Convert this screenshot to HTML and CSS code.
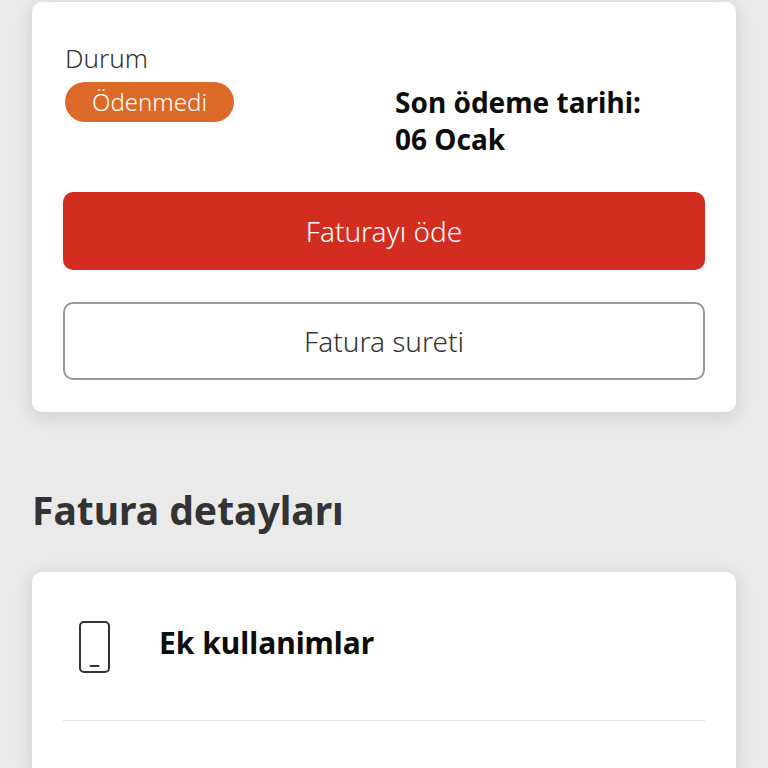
FILE: index.html
```html
<!DOCTYPE html>
<html lang="tr">
<head>
    <meta charset="UTF-8">
    <meta name="viewport" content="width=device-width, initial-scale=1.0">
    <title>Fatura detayları</title>
    <link rel="stylesheet" href="styles.css">
</head>
<body>
    <main>
        <section class="card bill">
            <div class="bill-info">
                <div class="status">
                    <span class="status-label">Durum</span>
                    <span class="badge">Ödenmedi</span>
                </div>
                <div class="due-date">Son ödeme tarihi:<br>06 Ocak</div>
            </div>
            <button type="button" class="btn btn-primary">Faturayı öde</button>
            <button type="button" class="btn btn-outline">Fatura sureti</button>
        </section>

        <h1>Fatura detayları</h1>

        <section class="card details">
            <div class="detail-row">
                <svg class="phone-icon" viewBox="0 0 32 54" aria-hidden="true">
                    <rect x="1" y="2" width="29" height="50" rx="4"/>
                    <path d="M11.500 46h8"/>
                </svg>
                <h2>Ek kullanimlar</h2>
            </div>
        </section>
    </main>
</body>
</html>
```

FILE: styles.css
```css
* {
    box-sizing: border-box;
}
body {
    margin: 0;
    background: #eaeaea;
    color: #0d0d0d;
    font-family: "Noto Sans", "Open Sans", sans-serif;
}
main {
    display: flex;
    flex-direction: column;
    min-height: 100vh;
    padding: 2px 32px 0;
}
.card {
    background: white;
    border-radius: 10px;
    box-shadow: 0 4px 20px rgba(0, 0, 0, 0.12);
    padding: 32px 31px;
}
.bill {
    display: flex;
    flex-direction: column;
    gap: 32px;
}
.bill-info {
    display: grid;
    grid-template-columns: 33fr 31fr;
    padding: 8px 0 2px 2px;
}
.status {
    display: flex;
    flex-direction: column;
    align-items: flex-start;
    gap: 8px;
}
.status-label {
    color: #333;
    font-size: 26px;
    font-weight: 300;
    line-height: 32px;
}
.badge {
    padding: 0 27px;
    border-radius: 20px;
    background: #db6a29;
    color: white;
    font-size: 24px;
    font-weight: 300;
    line-height: 40px;
}
.due-date {
    padding-top: 42px;
    font-size: 28px;
    font-weight: 700;
    line-height: 37px;
}
.btn {
    width: 100%;
    height: 78px;
    padding: 0;
    border: 2px solid #999;
    border-radius: 10px;
    font-family: inherit;
    font-size: 28px;
    font-weight: 300;
    cursor: pointer;
}
.btn-primary {
    border-color: #d32d20;
    background: #d32d20;
    color: white;
}
.btn-outline {
    background: white;
    color: #333;
}
h1 {
    margin: 68px 0 32px;
    color: #333;
    font-size: 39px;
    font-weight: 700;
    line-height: 60px;
}
.details {
    flex: 1;
    padding-bottom: 0;
    border-radius: 10px 10px 0 0;
}
.detail-row {
    display: flex;
    align-items: flex-start;
    gap: 48px;
    padding: 16px 16px 46px;
    border-bottom: 1px solid #e2e2e2;
}
.phone-icon {
    width: 32px;
    height: 54px;
    fill: none;
    stroke: #333;
    stroke-width: 2;
    stroke-linecap: round;
}
h2 {
    margin: 0;
    font-size: 30px;
    font-weight: 700;
    line-height: 46px;
}
```
